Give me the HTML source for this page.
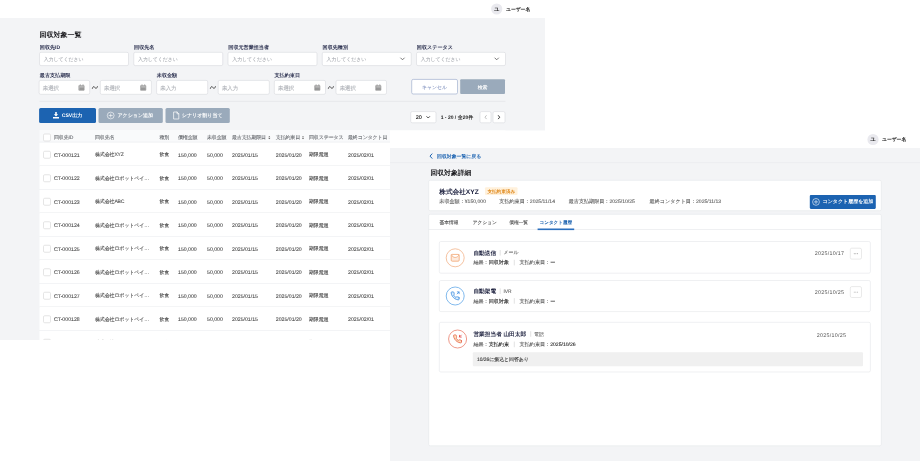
<!DOCTYPE html>
<html lang="ja"><head><meta charset="utf-8"><title>回収対象一覧</title>
<style>
html,body{margin:0;padding:0}
body{width:920px;height:461px;position:relative;overflow:hidden;background:#fff;font-family:"Liberation Sans",sans-serif;text-rendering:geometricPrecision}
#s1{will-change:transform;position:absolute;left:0;top:0;width:545px;height:340px;overflow:hidden;background:#fff}
#s2{will-change:transform;position:absolute;left:0;top:0;width:920px;height:461px;overflow:hidden;clip-path:inset(130.5px 0 0 390px)}
svg.g{position:absolute;left:0;top:0}
.t{position:absolute;white-space:nowrap;line-height:10px;-webkit-text-stroke:0.1px currentColor}

</style></head>
<body>
<div id="s1">
<svg class="g" width="920" height="461" viewBox="0 0 920 461">
<rect x="0" y="18" width="545" height="322" fill="#f3f4f6"/>
<circle cx="496.7" cy="9" r="5.6" fill="#e9e9ee"/>
<rect x="39.5" y="52.3" width="89" height="13.3" fill="#fff" rx="1.5" stroke="#d6d9de" stroke-width="0.6"/>
<rect x="133.75" y="52.3" width="89" height="13.3" fill="#fff" rx="1.5" stroke="#d6d9de" stroke-width="0.6"/>
<rect x="228" y="52.3" width="89" height="13.3" fill="#fff" rx="1.5" stroke="#d6d9de" stroke-width="0.6"/>
<rect x="322.25" y="52.3" width="89" height="13.3" fill="#fff" rx="1.5" stroke="#d6d9de" stroke-width="0.6"/>
<rect x="416.5" y="52.3" width="89" height="13.3" fill="#fff" rx="1.5" stroke="#d6d9de" stroke-width="0.6"/>
<path transform="translate(400.7 58) scale(1)" d="M0 0L1.800 1.800L3.600 0" fill="none" stroke="#555" stroke-width="0.8" stroke-linecap="round" stroke-linejoin="round"/>
<path transform="translate(494.9 58) scale(1)" d="M0 0L1.800 1.800L3.600 0" fill="none" stroke="#555" stroke-width="0.8" stroke-linecap="round" stroke-linejoin="round"/>
<rect x="39.1" y="80.4" width="50.6" height="13.9" fill="#fff" rx="1.5" stroke="#d6d9de" stroke-width="0.6"/>
<path transform="translate(78.8 84.4) scale(1)" d="M0.4 1.3h4.9v4.5H0.4z M1.5 0.2v1.8 M4.2 0.2v1.8" fill="#989898" stroke="#989898" stroke-width="0.7" stroke-linecap="round" stroke-linejoin="round"/>
<path d="M79.5 86.9L83.8 86.9" stroke="#fff" stroke-width="0.5" fill="none"/>
<rect x="100.3" y="80.4" width="51.1" height="13.9" fill="#fff" rx="1.5" stroke="#d6d9de" stroke-width="0.6"/>
<path transform="translate(140.5 84.4) scale(1)" d="M0.4 1.3h4.9v4.5H0.4z M1.5 0.2v1.8 M4.2 0.2v1.8" fill="#989898" stroke="#989898" stroke-width="0.7" stroke-linecap="round" stroke-linejoin="round"/>
<path d="M141.2 86.9L145.5 86.9" stroke="#fff" stroke-width="0.5" fill="none"/>
<rect x="156.6" y="80.4" width="51.1" height="13.9" fill="#fff" rx="1.5" stroke="#d6d9de" stroke-width="0.6"/>
<rect x="218.2" y="80.4" width="51.1" height="13.9" fill="#fff" rx="1.5" stroke="#d6d9de" stroke-width="0.6"/>
<rect x="274.3" y="80.4" width="51.2" height="13.9" fill="#fff" rx="1.5" stroke="#d6d9de" stroke-width="0.6"/>
<path transform="translate(314.6 84.4) scale(1)" d="M0.4 1.3h4.9v4.5H0.4z M1.5 0.2v1.8 M4.2 0.2v1.8" fill="#989898" stroke="#989898" stroke-width="0.7" stroke-linecap="round" stroke-linejoin="round"/>
<path d="M315.3 86.9L319.6 86.9" stroke="#fff" stroke-width="0.5" fill="none"/>
<rect x="336" y="80.4" width="50.5" height="13.9" fill="#fff" rx="1.5" stroke="#d6d9de" stroke-width="0.6"/>
<path transform="translate(375.6 84.4) scale(1)" d="M0.4 1.3h4.9v4.5H0.4z M1.5 0.2v1.8 M4.2 0.2v1.8" fill="#989898" stroke="#989898" stroke-width="0.7" stroke-linecap="round" stroke-linejoin="round"/>
<path d="M376.3 86.9L380.6 86.9" stroke="#fff" stroke-width="0.5" fill="none"/>
<path transform="translate(92.4 86) scale(1)" d="M0 2.4C0.700 0.100 1.700 0.100 2.500 1.500C3.300 2.900 4.300 2.900 5 0.600" fill="none" stroke="#2a2a2a" stroke-width="0.8" stroke-linecap="round" stroke-linejoin="round"/>
<path transform="translate(210.4 86) scale(1)" d="M0 2.4C0.700 0.100 1.700 0.100 2.500 1.500C3.300 2.900 4.300 2.900 5 0.600" fill="none" stroke="#2a2a2a" stroke-width="0.8" stroke-linecap="round" stroke-linejoin="round"/>
<path transform="translate(328.4 86) scale(1)" d="M0 2.4C0.700 0.100 1.700 0.100 2.500 1.500C3.300 2.900 4.300 2.900 5 0.600" fill="none" stroke="#2a2a2a" stroke-width="0.8" stroke-linecap="round" stroke-linejoin="round"/>
<rect x="411.7" y="79.4" width="45.8" height="14.6" fill="#fff" rx="1.5" stroke="#a3b1d0" stroke-width="0.7"/>
<rect x="460.2" y="79.3" width="44.8" height="14.8" fill="#9aaabb" rx="1"/>
<path d="M39.5 101.4L505.4 101.4" stroke="#e2e4e8" stroke-width="0.7" fill="none"/>
<rect x="39.1" y="108" width="56.9" height="14.9" fill="#1c63b1" rx="1.5"/>
<rect x="98.5" y="108" width="64.3" height="14.9" fill="#9aaabb" rx="1.5"/>
<rect x="165.5" y="108" width="64.3" height="14.9" fill="#9aaabb" rx="1.5"/>
<path transform="translate(53 112.1) scale(1)" d="M2.2 0h1.6v2.200h1.400L3 4.500 0.800 2.200h1.400z M0 4.800h6v1.700H0z" fill="#fff"/>
<circle cx="110.7" cy="115.5" r="3.4" fill="none" stroke="#fff" stroke-width="0.6"/>
<path transform="translate(110.7 115.5) scale(1)" d="M-1.600 0h3.200M0-1.600v3.200" fill="none" stroke="#fff" stroke-width="0.6" stroke-linecap="round" stroke-linejoin="round"/>
<path transform="translate(173.6 111.6) scale(1)" d="M0.400 0.400h3l1.800 1.800v5.200h-4.800z M3.400 0.400v1.800h1.800" fill="none" stroke="#fff" stroke-width="0.7" stroke-linecap="round" stroke-linejoin="round"/>
<rect x="410.7" y="111.6" width="25.3" height="11.2" fill="#fff" rx="1.5" stroke="#d6d9de" stroke-width="0.6"/>
<path transform="translate(426.8 116.6) scale(1)" d="M0 0L1.400 1.400L2.800 0" fill="none" stroke="#222" stroke-width="0.8" stroke-linecap="round" stroke-linejoin="round"/>
<rect x="480" y="111.6" width="11" height="11.2" fill="#fff" rx="1.5" stroke="#d6d9de" stroke-width="0.6"/>
<rect x="493" y="111.6" width="12" height="11.2" fill="#fff" rx="1.5" stroke="#d6d9de" stroke-width="0.6"/>
<path transform="translate(485 115.6) scale(1)" d="M1.300 0L0 1.600L1.300 3.200" fill="none" stroke="#b0b0b0" stroke-width="0.8" stroke-linecap="round" stroke-linejoin="round"/>
<path transform="translate(498.4 115.6) scale(1)" d="M0 0L1.300 1.600L0 3.200" fill="none" stroke="#222" stroke-width="0.9" stroke-linecap="round" stroke-linejoin="round"/>
<rect x="39.5" y="130" width="465.9" height="12.5" fill="#f9fafb"/>
<path d="M39.5 142.3L505.4 142.3" stroke="#e6e8eb" stroke-width="0.7" fill="none"/>
<rect x="43.5" y="134" width="7" height="7" fill="#fff" rx="1.2" stroke="#d4d4d4" stroke-width="0.6"/>
<path transform="translate(268.3 135.9) scale(1)" d="M0 1.300L1 0L2 1.300z M0 2.100L1 3.400L2 2.100z" fill="#555"/>
<path transform="translate(302 135.9) scale(1)" d="M0 1.300L1 0L2 1.300z M0 2.100L1 3.400L2 2.100z" fill="#555"/>
<rect x="39.5" y="142.5" width="465.9" height="23.5" fill="#fff"/>
<path d="M39.5 166L505.4 166" stroke="#e2e4e8" stroke-width="0.8" fill="none"/>
<rect x="43.5" y="151.25" width="7" height="7" fill="#fff" rx="1.2" stroke="#d4d4d4" stroke-width="0.6"/>
<rect x="39.5" y="166" width="465.9" height="23.5" fill="#fff"/>
<path d="M39.5 189.5L505.4 189.5" stroke="#e2e4e8" stroke-width="0.8" fill="none"/>
<rect x="43.5" y="174.75" width="7" height="7" fill="#fff" rx="1.2" stroke="#d4d4d4" stroke-width="0.6"/>
<rect x="39.5" y="189.5" width="465.9" height="23.5" fill="#fff"/>
<path d="M39.5 213L505.4 213" stroke="#e2e4e8" stroke-width="0.8" fill="none"/>
<rect x="43.5" y="198.25" width="7" height="7" fill="#fff" rx="1.2" stroke="#d4d4d4" stroke-width="0.6"/>
<rect x="39.5" y="213" width="465.9" height="23.5" fill="#fff"/>
<path d="M39.5 236.5L505.4 236.5" stroke="#e2e4e8" stroke-width="0.8" fill="none"/>
<rect x="43.5" y="221.75" width="7" height="7" fill="#fff" rx="1.2" stroke="#d4d4d4" stroke-width="0.6"/>
<rect x="39.5" y="236.5" width="465.9" height="23.5" fill="#fff"/>
<path d="M39.5 260L505.4 260" stroke="#e2e4e8" stroke-width="0.8" fill="none"/>
<rect x="43.5" y="245.25" width="7" height="7" fill="#fff" rx="1.2" stroke="#d4d4d4" stroke-width="0.6"/>
<rect x="39.5" y="260" width="465.9" height="23.5" fill="#fff"/>
<path d="M39.5 283.5L505.4 283.5" stroke="#e2e4e8" stroke-width="0.8" fill="none"/>
<rect x="43.5" y="268.75" width="7" height="7" fill="#fff" rx="1.2" stroke="#d4d4d4" stroke-width="0.6"/>
<rect x="39.5" y="283.5" width="465.9" height="23.5" fill="#fff"/>
<path d="M39.5 307L505.4 307" stroke="#e2e4e8" stroke-width="0.8" fill="none"/>
<rect x="43.5" y="292.25" width="7" height="7" fill="#fff" rx="1.2" stroke="#d4d4d4" stroke-width="0.6"/>
<rect x="39.5" y="307" width="465.9" height="23.5" fill="#fff"/>
<path d="M39.5 330.5L505.4 330.5" stroke="#e2e4e8" stroke-width="0.8" fill="none"/>
<rect x="43.5" y="315.75" width="7" height="7" fill="#fff" rx="1.2" stroke="#d4d4d4" stroke-width="0.6"/>
<rect x="39.5" y="330.5" width="465.9" height="23.5" fill="#fff"/>
<path d="M39.5 354L505.4 354" stroke="#e2e4e8" stroke-width="0.8" fill="none"/>
<rect x="43.5" y="339.25" width="7" height="7" fill="#fff" rx="1.2" stroke="#d4d4d4" stroke-width="0.6"/>
</svg>
<div class="t" style="left:491.1px;top:5px;font-size:5.4px;color:#222;font-weight:bold;-webkit-text-stroke:0;width:11.2px;text-align:center;">ユ</div>
<div class="t" style="left:506px;top:6px;font-size:4.8px;color:#111;font-weight:bold;-webkit-text-stroke:0;">ユーザー名</div>
<div class="t" style="left:39.5px;top:31px;font-size:7px;color:#1b1b1f;font-weight:bold;-webkit-text-stroke:0;">回収対象一覧</div>
<div class="t" style="left:39.8px;top:43px;font-size:5.1px;color:#2c3150;font-weight:bold;-webkit-text-stroke:0;">回収先ID</div>
<div class="t" style="left:43.8px;top:56px;font-size:4.9px;color:#adb0b6;">入力してください</div>
<div class="t" style="left:134.05px;top:43px;font-size:5.1px;color:#2c3150;font-weight:bold;-webkit-text-stroke:0;">回収先名</div>
<div class="t" style="left:138.05px;top:56px;font-size:4.9px;color:#adb0b6;">入力してください</div>
<div class="t" style="left:228.3px;top:43px;font-size:5.1px;color:#2c3150;font-weight:bold;-webkit-text-stroke:0;">回収元営業担当者</div>
<div class="t" style="left:232.3px;top:56px;font-size:4.9px;color:#adb0b6;">入力してください</div>
<div class="t" style="left:322.55px;top:43px;font-size:5.1px;color:#2c3150;font-weight:bold;-webkit-text-stroke:0;">回収先種別</div>
<div class="t" style="left:326.55px;top:56px;font-size:4.9px;color:#adb0b6;">入力してください</div>
<div class="t" style="left:416.8px;top:43px;font-size:5.1px;color:#2c3150;font-weight:bold;-webkit-text-stroke:0;">回収ステータス</div>
<div class="t" style="left:420.8px;top:56px;font-size:4.9px;color:#adb0b6;">入力してください</div>
<div class="t" style="left:39.8px;top:71px;font-size:5.1px;color:#2c3150;font-weight:bold;-webkit-text-stroke:0;">最古支払期限</div>
<div class="t" style="left:156.8px;top:71px;font-size:5.1px;color:#2c3150;font-weight:bold;-webkit-text-stroke:0;">未収金額</div>
<div class="t" style="left:274.5px;top:71px;font-size:5.1px;color:#2c3150;font-weight:bold;-webkit-text-stroke:0;">支払約束日</div>
<div class="t" style="left:42.8px;top:84px;font-size:5.4px;color:#adb0b6;">未選択</div>
<div class="t" style="left:104px;top:84px;font-size:5.4px;color:#adb0b6;">未選択</div>
<div class="t" style="left:160.3px;top:84px;font-size:5.4px;color:#adb0b6;">未入力</div>
<div class="t" style="left:221.9px;top:84px;font-size:5.4px;color:#adb0b6;">未入力</div>
<div class="t" style="left:278px;top:84px;font-size:5.4px;color:#adb0b6;">未選択</div>
<div class="t" style="left:339.7px;top:84px;font-size:5.4px;color:#adb0b6;">未選択</div>
<div class="t" style="left:411.7px;top:84px;font-size:4.9px;color:#8c9bc4;width:45.8px;text-align:center;">キャンセル</div>
<div class="t" style="left:460.2px;top:84px;font-size:4.9px;color:#fff;width:44.8px;text-align:center;">検索</div>
<div class="t" style="left:61.8px;top:111px;font-size:5.1px;color:#fff;font-weight:bold;-webkit-text-stroke:0;">CSV出力</div>
<div class="t" style="left:117.5px;top:111px;font-size:5px;color:#fff;font-weight:bold;-webkit-text-stroke:0;">アクション追加</div>
<div class="t" style="left:181.8px;top:111px;font-size:5px;color:#fff;font-weight:bold;-webkit-text-stroke:0;">シナリオ割り当て</div>
<div class="t" style="left:415.8px;top:113px;font-size:5.4px;color:#111;">20</div>
<div class="t" style="left:440.7px;top:113px;font-size:5px;color:#222;font-weight:bold;-webkit-text-stroke:0;">1 - 20 / 全20件</div>
<div class="t" style="left:54px;top:133px;font-size:5px;color:#6a6d72;letter-spacing:-0.15px;">回収先ID</div>
<div class="t" style="left:95px;top:133px;font-size:5px;color:#6a6d72;letter-spacing:-0.15px;">回収先名</div>
<div class="t" style="left:159.5px;top:133px;font-size:5px;color:#6a6d72;letter-spacing:-0.15px;">種別</div>
<div class="t" style="left:178px;top:133px;font-size:5px;color:#6a6d72;letter-spacing:-0.15px;">債権金額</div>
<div class="t" style="left:207px;top:133px;font-size:5px;color:#6a6d72;letter-spacing:-0.15px;">未収金額</div>
<div class="t" style="left:232px;top:133px;font-size:5px;color:#6a6d72;letter-spacing:-0.15px;">最古支払期限日</div>
<div class="t" style="left:275.8px;top:133px;font-size:5px;color:#6a6d72;letter-spacing:-0.15px;">支払約束日</div>
<div class="t" style="left:309px;top:133px;font-size:5px;color:#6a6d72;letter-spacing:-0.15px;">回収ステータス</div>
<div class="t" style="left:348px;top:133px;font-size:5px;color:#6a6d72;letter-spacing:-0.15px;">最終コンタクト日</div>
<div class="t" style="left:54px;top:151px;font-size:5.2px;color:#4d4d4d;">CT-000121</div>
<div class="t" style="left:95px;top:150px;font-size:5px;color:#4d4d4d;letter-spacing:-0.15px;">株式会社XYZ</div>
<div class="t" style="left:159.5px;top:150px;font-size:5px;color:#4d4d4d;letter-spacing:-0.15px;">飲食</div>
<div class="t" style="left:178px;top:151px;font-size:5.2px;color:#4d4d4d;">150,000</div>
<div class="t" style="left:207px;top:151px;font-size:5.2px;color:#4d4d4d;">50,000</div>
<div class="t" style="left:232px;top:151px;font-size:5.2px;color:#4d4d4d;">2025/01/15</div>
<div class="t" style="left:275.8px;top:151px;font-size:5.2px;color:#4d4d4d;">2025/01/20</div>
<div class="t" style="left:309px;top:150px;font-size:5px;color:#4d4d4d;letter-spacing:-0.15px;">期限超過</div>
<div class="t" style="left:348px;top:151px;font-size:5.2px;color:#4d4d4d;">2025/02/01</div>
<div class="t" style="left:54px;top:174px;font-size:5.2px;color:#4d4d4d;">CT-000122</div>
<div class="t" style="left:95px;top:174px;font-size:5px;color:#4d4d4d;letter-spacing:-0.15px;">株式会社ロボットペイ…</div>
<div class="t" style="left:159.5px;top:174px;font-size:5px;color:#4d4d4d;letter-spacing:-0.15px;">飲食</div>
<div class="t" style="left:178px;top:174px;font-size:5.2px;color:#4d4d4d;">150,000</div>
<div class="t" style="left:207px;top:174px;font-size:5.2px;color:#4d4d4d;">50,000</div>
<div class="t" style="left:232px;top:174px;font-size:5.2px;color:#4d4d4d;">2025/01/15</div>
<div class="t" style="left:275.8px;top:174px;font-size:5.2px;color:#4d4d4d;">2025/01/20</div>
<div class="t" style="left:309px;top:174px;font-size:5px;color:#4d4d4d;letter-spacing:-0.15px;">期限超過</div>
<div class="t" style="left:348px;top:174px;font-size:5.2px;color:#4d4d4d;">2025/02/01</div>
<div class="t" style="left:54px;top:198px;font-size:5.2px;color:#4d4d4d;">CT-000123</div>
<div class="t" style="left:95px;top:197px;font-size:5px;color:#4d4d4d;letter-spacing:-0.15px;">株式会社ABC</div>
<div class="t" style="left:159.5px;top:197px;font-size:5px;color:#4d4d4d;letter-spacing:-0.15px;">飲食</div>
<div class="t" style="left:178px;top:198px;font-size:5.2px;color:#4d4d4d;">150,000</div>
<div class="t" style="left:207px;top:198px;font-size:5.2px;color:#4d4d4d;">50,000</div>
<div class="t" style="left:232px;top:198px;font-size:5.2px;color:#4d4d4d;">2025/01/15</div>
<div class="t" style="left:275.8px;top:198px;font-size:5.2px;color:#4d4d4d;">2025/01/20</div>
<div class="t" style="left:309px;top:197px;font-size:5px;color:#4d4d4d;letter-spacing:-0.15px;">期限超過</div>
<div class="t" style="left:348px;top:198px;font-size:5.2px;color:#4d4d4d;">2025/02/01</div>
<div class="t" style="left:54px;top:221px;font-size:5.2px;color:#4d4d4d;">CT-000124</div>
<div class="t" style="left:95px;top:221px;font-size:5px;color:#4d4d4d;letter-spacing:-0.15px;">株式会社ロボットペイ…</div>
<div class="t" style="left:159.5px;top:221px;font-size:5px;color:#4d4d4d;letter-spacing:-0.15px;">飲食</div>
<div class="t" style="left:178px;top:221px;font-size:5.2px;color:#4d4d4d;">150,000</div>
<div class="t" style="left:207px;top:221px;font-size:5.2px;color:#4d4d4d;">50,000</div>
<div class="t" style="left:232px;top:221px;font-size:5.2px;color:#4d4d4d;">2025/01/15</div>
<div class="t" style="left:275.8px;top:221px;font-size:5.2px;color:#4d4d4d;">2025/01/20</div>
<div class="t" style="left:309px;top:221px;font-size:5px;color:#4d4d4d;letter-spacing:-0.15px;">期限超過</div>
<div class="t" style="left:348px;top:221px;font-size:5.2px;color:#4d4d4d;">2025/02/01</div>
<div class="t" style="left:54px;top:245px;font-size:5.2px;color:#4d4d4d;">CT-000125</div>
<div class="t" style="left:95px;top:244px;font-size:5px;color:#4d4d4d;letter-spacing:-0.15px;">株式会社ロボットペイ…</div>
<div class="t" style="left:159.5px;top:244px;font-size:5px;color:#4d4d4d;letter-spacing:-0.15px;">飲食</div>
<div class="t" style="left:178px;top:245px;font-size:5.2px;color:#4d4d4d;">150,000</div>
<div class="t" style="left:207px;top:245px;font-size:5.2px;color:#4d4d4d;">50,000</div>
<div class="t" style="left:232px;top:245px;font-size:5.2px;color:#4d4d4d;">2025/01/15</div>
<div class="t" style="left:275.8px;top:245px;font-size:5.2px;color:#4d4d4d;">2025/01/20</div>
<div class="t" style="left:309px;top:244px;font-size:5px;color:#4d4d4d;letter-spacing:-0.15px;">期限超過</div>
<div class="t" style="left:348px;top:245px;font-size:5.2px;color:#4d4d4d;">2025/02/01</div>
<div class="t" style="left:54px;top:268px;font-size:5.2px;color:#4d4d4d;">CT-000126</div>
<div class="t" style="left:95px;top:268px;font-size:5px;color:#4d4d4d;letter-spacing:-0.15px;">株式会社ロボットペイ…</div>
<div class="t" style="left:159.5px;top:268px;font-size:5px;color:#4d4d4d;letter-spacing:-0.15px;">飲食</div>
<div class="t" style="left:178px;top:268px;font-size:5.2px;color:#4d4d4d;">150,000</div>
<div class="t" style="left:207px;top:268px;font-size:5.2px;color:#4d4d4d;">50,000</div>
<div class="t" style="left:232px;top:268px;font-size:5.2px;color:#4d4d4d;">2025/01/15</div>
<div class="t" style="left:275.8px;top:268px;font-size:5.2px;color:#4d4d4d;">2025/01/20</div>
<div class="t" style="left:309px;top:268px;font-size:5px;color:#4d4d4d;letter-spacing:-0.15px;">期限超過</div>
<div class="t" style="left:348px;top:268px;font-size:5.2px;color:#4d4d4d;">2025/02/01</div>
<div class="t" style="left:54px;top:292px;font-size:5.2px;color:#4d4d4d;">CT-000127</div>
<div class="t" style="left:95px;top:291px;font-size:5px;color:#4d4d4d;letter-spacing:-0.15px;">株式会社ロボットペイ…</div>
<div class="t" style="left:159.5px;top:291px;font-size:5px;color:#4d4d4d;letter-spacing:-0.15px;">飲食</div>
<div class="t" style="left:178px;top:292px;font-size:5.2px;color:#4d4d4d;">150,000</div>
<div class="t" style="left:207px;top:292px;font-size:5.2px;color:#4d4d4d;">50,000</div>
<div class="t" style="left:232px;top:292px;font-size:5.2px;color:#4d4d4d;">2025/01/15</div>
<div class="t" style="left:275.8px;top:292px;font-size:5.2px;color:#4d4d4d;">2025/01/20</div>
<div class="t" style="left:309px;top:291px;font-size:5px;color:#4d4d4d;letter-spacing:-0.15px;">期限超過</div>
<div class="t" style="left:348px;top:292px;font-size:5.2px;color:#4d4d4d;">2025/02/01</div>
<div class="t" style="left:54px;top:315px;font-size:5.2px;color:#4d4d4d;">CT-000128</div>
<div class="t" style="left:95px;top:315px;font-size:5px;color:#4d4d4d;letter-spacing:-0.15px;">株式会社ロボットペイ…</div>
<div class="t" style="left:159.5px;top:315px;font-size:5px;color:#4d4d4d;letter-spacing:-0.15px;">飲食</div>
<div class="t" style="left:178px;top:315px;font-size:5.2px;color:#4d4d4d;">150,000</div>
<div class="t" style="left:207px;top:315px;font-size:5.2px;color:#4d4d4d;">50,000</div>
<div class="t" style="left:232px;top:315px;font-size:5.2px;color:#4d4d4d;">2025/01/15</div>
<div class="t" style="left:275.8px;top:315px;font-size:5.2px;color:#4d4d4d;">2025/01/20</div>
<div class="t" style="left:309px;top:315px;font-size:5px;color:#4d4d4d;letter-spacing:-0.15px;">期限超過</div>
<div class="t" style="left:348px;top:315px;font-size:5.2px;color:#4d4d4d;">2025/02/01</div>
<div class="t" style="left:54px;top:339px;font-size:5.2px;color:#4d4d4d;">CT-000129</div>
<div class="t" style="left:95px;top:338px;font-size:5px;color:#4d4d4d;letter-spacing:-0.15px;">株式会社ロボットペイ…</div>
<div class="t" style="left:159.5px;top:338px;font-size:5px;color:#4d4d4d;letter-spacing:-0.15px;">飲食</div>
<div class="t" style="left:178px;top:339px;font-size:5.2px;color:#4d4d4d;">150,000</div>
<div class="t" style="left:207px;top:339px;font-size:5.2px;color:#4d4d4d;">50,000</div>
<div class="t" style="left:232px;top:339px;font-size:5.2px;color:#4d4d4d;">2025/01/15</div>
<div class="t" style="left:275.8px;top:339px;font-size:5.2px;color:#4d4d4d;">2025/01/20</div>
<div class="t" style="left:309px;top:338px;font-size:5px;color:#4d4d4d;letter-spacing:-0.15px;">期限超過</div>
<div class="t" style="left:348px;top:339px;font-size:5.2px;color:#4d4d4d;">2025/02/01</div>
</div>
<div id="s2">
<svg class="g" width="920" height="461" viewBox="0 0 920 461">
<rect x="390" y="130.5" width="530" height="17.5" fill="#fff"/>
<rect x="390" y="148" width="530" height="313" fill="#f3f4f6"/>
<circle cx="873" cy="139.5" r="5.6" fill="#e9e9ee"/>
<path transform="translate(430 153.9) scale(1)" d="M2 0L0 2.200L2 4.400" fill="none" stroke="#1c63b1" stroke-width="1" stroke-linecap="round" stroke-linejoin="round"/>
<path d="M390 162.6L920 162.6" stroke="#e8eaed" stroke-width="0.6" fill="none"/>
<rect x="428.7" y="180.3" width="452.6" height="30.4" fill="#fff" rx="1.5" stroke="#e4e6e9" stroke-width="0.6"/>
<rect x="485" y="187.3" width="32.5" height="7.7" fill="#fff1dc" rx="1"/>
<rect x="809.8" y="194.9" width="66" height="14" fill="#1c63b1" rx="1.1"/>
<circle cx="816" cy="201.9" r="3.4" fill="none" stroke="#fff" stroke-width="0.6"/>
<path transform="translate(816 201.9) scale(1)" d="M-1.600 0h3.200M0-1.600v3.200" fill="none" stroke="#fff" stroke-width="0.6" stroke-linecap="round" stroke-linejoin="round"/>
<rect x="428.7" y="214.3" width="452.6" height="231.5" fill="#fff" rx="1.5" stroke="#e4e6e9" stroke-width="0.6"/>
<path d="M428.7 229.5L881.3 229.5" stroke="#e4e6e9" stroke-width="0.6" fill="none"/>
<rect x="537.6" y="228.5" width="36.6" height="1.6" fill="#2a6fbe"/>
<rect x="439.3" y="241.5" width="431.1" height="31.7" fill="#fff" rx="1.5" stroke="#e4e6e9" stroke-width="0.6"/>
<circle cx="455.2" cy="257.8" r="9" fill="#fff" stroke="#f2b48a" stroke-width="0.8"/>
<rect x="451.2" y="254.4" width="8" height="6.8" fill="#fdebde" rx="1" stroke="#f0a26c" stroke-width="0.75"/>
<path transform="translate(455.2 257.8) scale(1)" d="M-3.700 -2.800C-2.200 0.600 2.200 0.600 3.700 -2.800" fill="#fff" stroke="#f0a26c" stroke-width="0.75" stroke-linecap="round" stroke-linejoin="round"/>
<path d="M500.2 250L500.2 255.6" stroke="#cfcfcf" stroke-width="0.6" fill="none"/>
<path d="M514.3 259.8L514.3 265.4" stroke="#cfcfcf" stroke-width="0.6" fill="none"/>
<rect x="850.3" y="248.2" width="11.2" height="10.9" fill="#fff" rx="1.5" stroke="#dcdcdc" stroke-width="0.6"/>
<circle cx="854.2" cy="253.7" r="0.45" fill="#666"/>
<circle cx="855.9" cy="253.7" r="0.45" fill="#666"/>
<circle cx="857.6" cy="253.7" r="0.45" fill="#666"/>
<rect x="439.3" y="280.5" width="431.1" height="31.1" fill="#fff" rx="1.5" stroke="#e4e6e9" stroke-width="0.6"/>
<circle cx="455.2" cy="296" r="9" fill="#fff" stroke="#62a8e8" stroke-width="0.8"/>
<path transform="translate(455.1 295.9) scale(0.4)" d="M10 4.920v3a2 2 0 0 1-2.180 2 19.790 19.790 0 0 1-8.630-3.070 19.500 19.500 0 0 1-6-6 19.790 19.790 0 0 1-3.070-8.670A2 2 0 0 1-7.890-10h3a2 2 0 0 1 2 1.720 12.840 12.840 0 0 0 .7 2.810 2 2 0 0 1-.45 2.110L-3.910-2.090a16 16 0 0 0 6 6l1.270-1.270a2 2 0 0 1 2.110-.45 12.840 12.840 0 0 0 2.810.7A2 2 0 0 1 10 4.920z" fill="#dcedfc" stroke="#3a8be0" stroke-width="2" stroke-linecap="round" stroke-linejoin="round"/>
<path transform="translate(455.1 295.9) scale(0.4)" d="M5 -5L9.500 -9.500M5.500 -10h4.500v4.500" fill="none" stroke="#3a8be0" stroke-width="1.9" stroke-linecap="round" stroke-linejoin="round"/>
<path d="M500.2 288.4L500.2 294" stroke="#cfcfcf" stroke-width="0.6" fill="none"/>
<path d="M514.3 298.1L514.3 303.7" stroke="#cfcfcf" stroke-width="0.6" fill="none"/>
<rect x="850.3" y="286.6" width="11.2" height="10.9" fill="#fff" rx="1.5" stroke="#dcdcdc" stroke-width="0.6"/>
<circle cx="854.2" cy="292.1" r="0.45" fill="#666"/>
<circle cx="855.9" cy="292.1" r="0.45" fill="#666"/>
<circle cx="857.6" cy="292.1" r="0.45" fill="#666"/>
<rect x="439.3" y="322.3" width="431.1" height="49.7" fill="#fff" rx="1.5" stroke="#e4e6e9" stroke-width="0.6"/>
<circle cx="457.6" cy="339" r="9" fill="#fff" stroke="#ea7f6c" stroke-width="0.8"/>
<path transform="translate(457.5 338.9) scale(0.4)" d="M10 4.920v3a2 2 0 0 1-2.180 2 19.790 19.790 0 0 1-8.630-3.070 19.500 19.500 0 0 1-6-6 19.790 19.790 0 0 1-3.070-8.670A2 2 0 0 1-7.890-10h3a2 2 0 0 1 2 1.720 12.840 12.840 0 0 0 .7 2.810 2 2 0 0 1-.45 2.110L-3.910-2.090a16 16 0 0 0 6 6l1.270-1.270a2 2 0 0 1 2.110-.45 12.840 12.840 0 0 0 2.810.7A2 2 0 0 1 10 4.920z" fill="#fde3bd" stroke="#e4604a" stroke-width="2" stroke-linecap="round" stroke-linejoin="round"/>
<path transform="translate(457.5 338.9) scale(0.4)" d="M9.500 -9.500L5 -5M9.500 -4.500h-4.500v-4.500" fill="none" stroke="#e23c3c" stroke-width="1.9" stroke-linecap="round" stroke-linejoin="round"/>
<path d="M530.7 331.2L530.7 336.8" stroke="#cfcfcf" stroke-width="0.6" fill="none"/>
<path d="M514.3 341.6L514.3 347.2" stroke="#cfcfcf" stroke-width="0.6" fill="none"/>
<rect x="472.8" y="352.3" width="390.2" height="14" fill="#f0f0f0" rx="1"/>
</svg>
<div class="t" style="left:867.4px;top:135px;font-size:5.4px;color:#222;font-weight:bold;-webkit-text-stroke:0;width:11.2px;text-align:center;">ユ</div>
<div class="t" style="left:882px;top:136px;font-size:4.8px;color:#111;font-weight:bold;-webkit-text-stroke:0;">ユーザー名</div>
<div class="t" style="left:437px;top:153px;font-size:4.9px;color:#1c63b1;font-weight:bold;-webkit-text-stroke:0;">回収対象一覧に戻る</div>
<div class="t" style="left:430.5px;top:169px;font-size:6.8px;color:#1b1b1f;font-weight:bold;-webkit-text-stroke:0;">回収対象詳細</div>
<div class="t" style="left:439.3px;top:188px;font-size:6.65px;color:#1f2340;font-weight:bold;-webkit-text-stroke:0;">株式会社XYZ</div>
<div class="t" style="left:485px;top:187px;font-size:4.6px;color:#e08a1e;font-weight:bold;-webkit-text-stroke:0;width:32.5px;text-align:center;">支払約束済み</div>
<div class="t" style="left:439.3px;top:197px;font-size:5.1px;color:#626262;">未収金額：¥150,000</div>
<div class="t" style="left:499.3px;top:197px;font-size:5.1px;color:#626262;">支払約束日：2025/11/14</div>
<div class="t" style="left:568.7px;top:197px;font-size:5.1px;color:#626262;">最古支払期限日：2025/10/25</div>
<div class="t" style="left:649.6px;top:197px;font-size:5.1px;color:#626262;">最終コンタクト日：2025/11/13</div>
<div class="t" style="left:822.6px;top:197px;font-size:5px;color:#fff;font-weight:bold;-webkit-text-stroke:0;">コンタクト履歴を追加</div>
<div class="t" style="left:439.6px;top:218px;font-size:4.7px;color:#555;">基本情報</div>
<div class="t" style="left:472.8px;top:218px;font-size:4.7px;color:#555;">アクション</div>
<div class="t" style="left:509.3px;top:218px;font-size:4.7px;color:#555;">債権一覧</div>
<div class="t" style="left:539.5px;top:218px;font-size:4.6px;color:#1c63b1;font-weight:bold;-webkit-text-stroke:0;">コンタクト履歴</div>
<div class="t" style="left:473.4px;top:249px;font-size:5.7px;color:#1f2340;font-weight:bold;-webkit-text-stroke:0;">自動送信</div>
<div class="t" style="left:503.5px;top:249px;font-size:4.9px;color:#5a5a5a;">メール</div>
<div class="t" style="left:473.4px;top:258px;font-size:5.1px;color:#5c5c5c;">結果：<span style="color:#222">回収対象</span></div>
<div class="t" style="left:519.6px;top:258px;font-size:5.1px;color:#5c5c5c;">支払約束日：<span style="color:#222">ー</span></div>
<div class="t" style="left:814.7px;top:249px;font-size:5.3px;color:#505050;letter-spacing:0.3px;-webkit-text-stroke:0;">2025/10/17</div>
<div class="t" style="left:473.4px;top:287px;font-size:5.7px;color:#1f2340;font-weight:bold;-webkit-text-stroke:0;">自動架電</div>
<div class="t" style="left:503.5px;top:288px;font-size:4.9px;color:#6a6a6a;">IVR</div>
<div class="t" style="left:473.4px;top:297px;font-size:5.1px;color:#5c5c5c;">結果：<span style="color:#222">回収対象</span></div>
<div class="t" style="left:519.6px;top:297px;font-size:5.1px;color:#5c5c5c;">支払約束日：<span style="color:#222">ー</span></div>
<div class="t" style="left:814.7px;top:288px;font-size:5.3px;color:#505050;letter-spacing:0.3px;-webkit-text-stroke:0;">2025/10/25</div>
<div class="t" style="left:473.4px;top:330px;font-size:5.7px;color:#1f2340;font-weight:bold;-webkit-text-stroke:0;">営業担当者 山田太郎</div>
<div class="t" style="left:534px;top:331px;font-size:4.9px;color:#8a8a8a;">電話</div>
<div class="t" style="left:473.4px;top:340px;font-size:5.1px;color:#5c5c5c;">結果：<span style="color:#222">支払約束</span></div>
<div class="t" style="left:519.6px;top:340px;font-size:5.1px;color:#5c5c5c;">支払約束日：<span style="color:#222">2025/10/26</span></div>
<div class="t" style="left:816.8px;top:331px;font-size:5.3px;color:#505050;letter-spacing:0.3px;-webkit-text-stroke:0;">2025/10/25</div>
<div class="t" style="left:477px;top:356px;font-size:4.9px;color:#333;">10/26に振込と回答あり</div>
</div>
</body></html>
